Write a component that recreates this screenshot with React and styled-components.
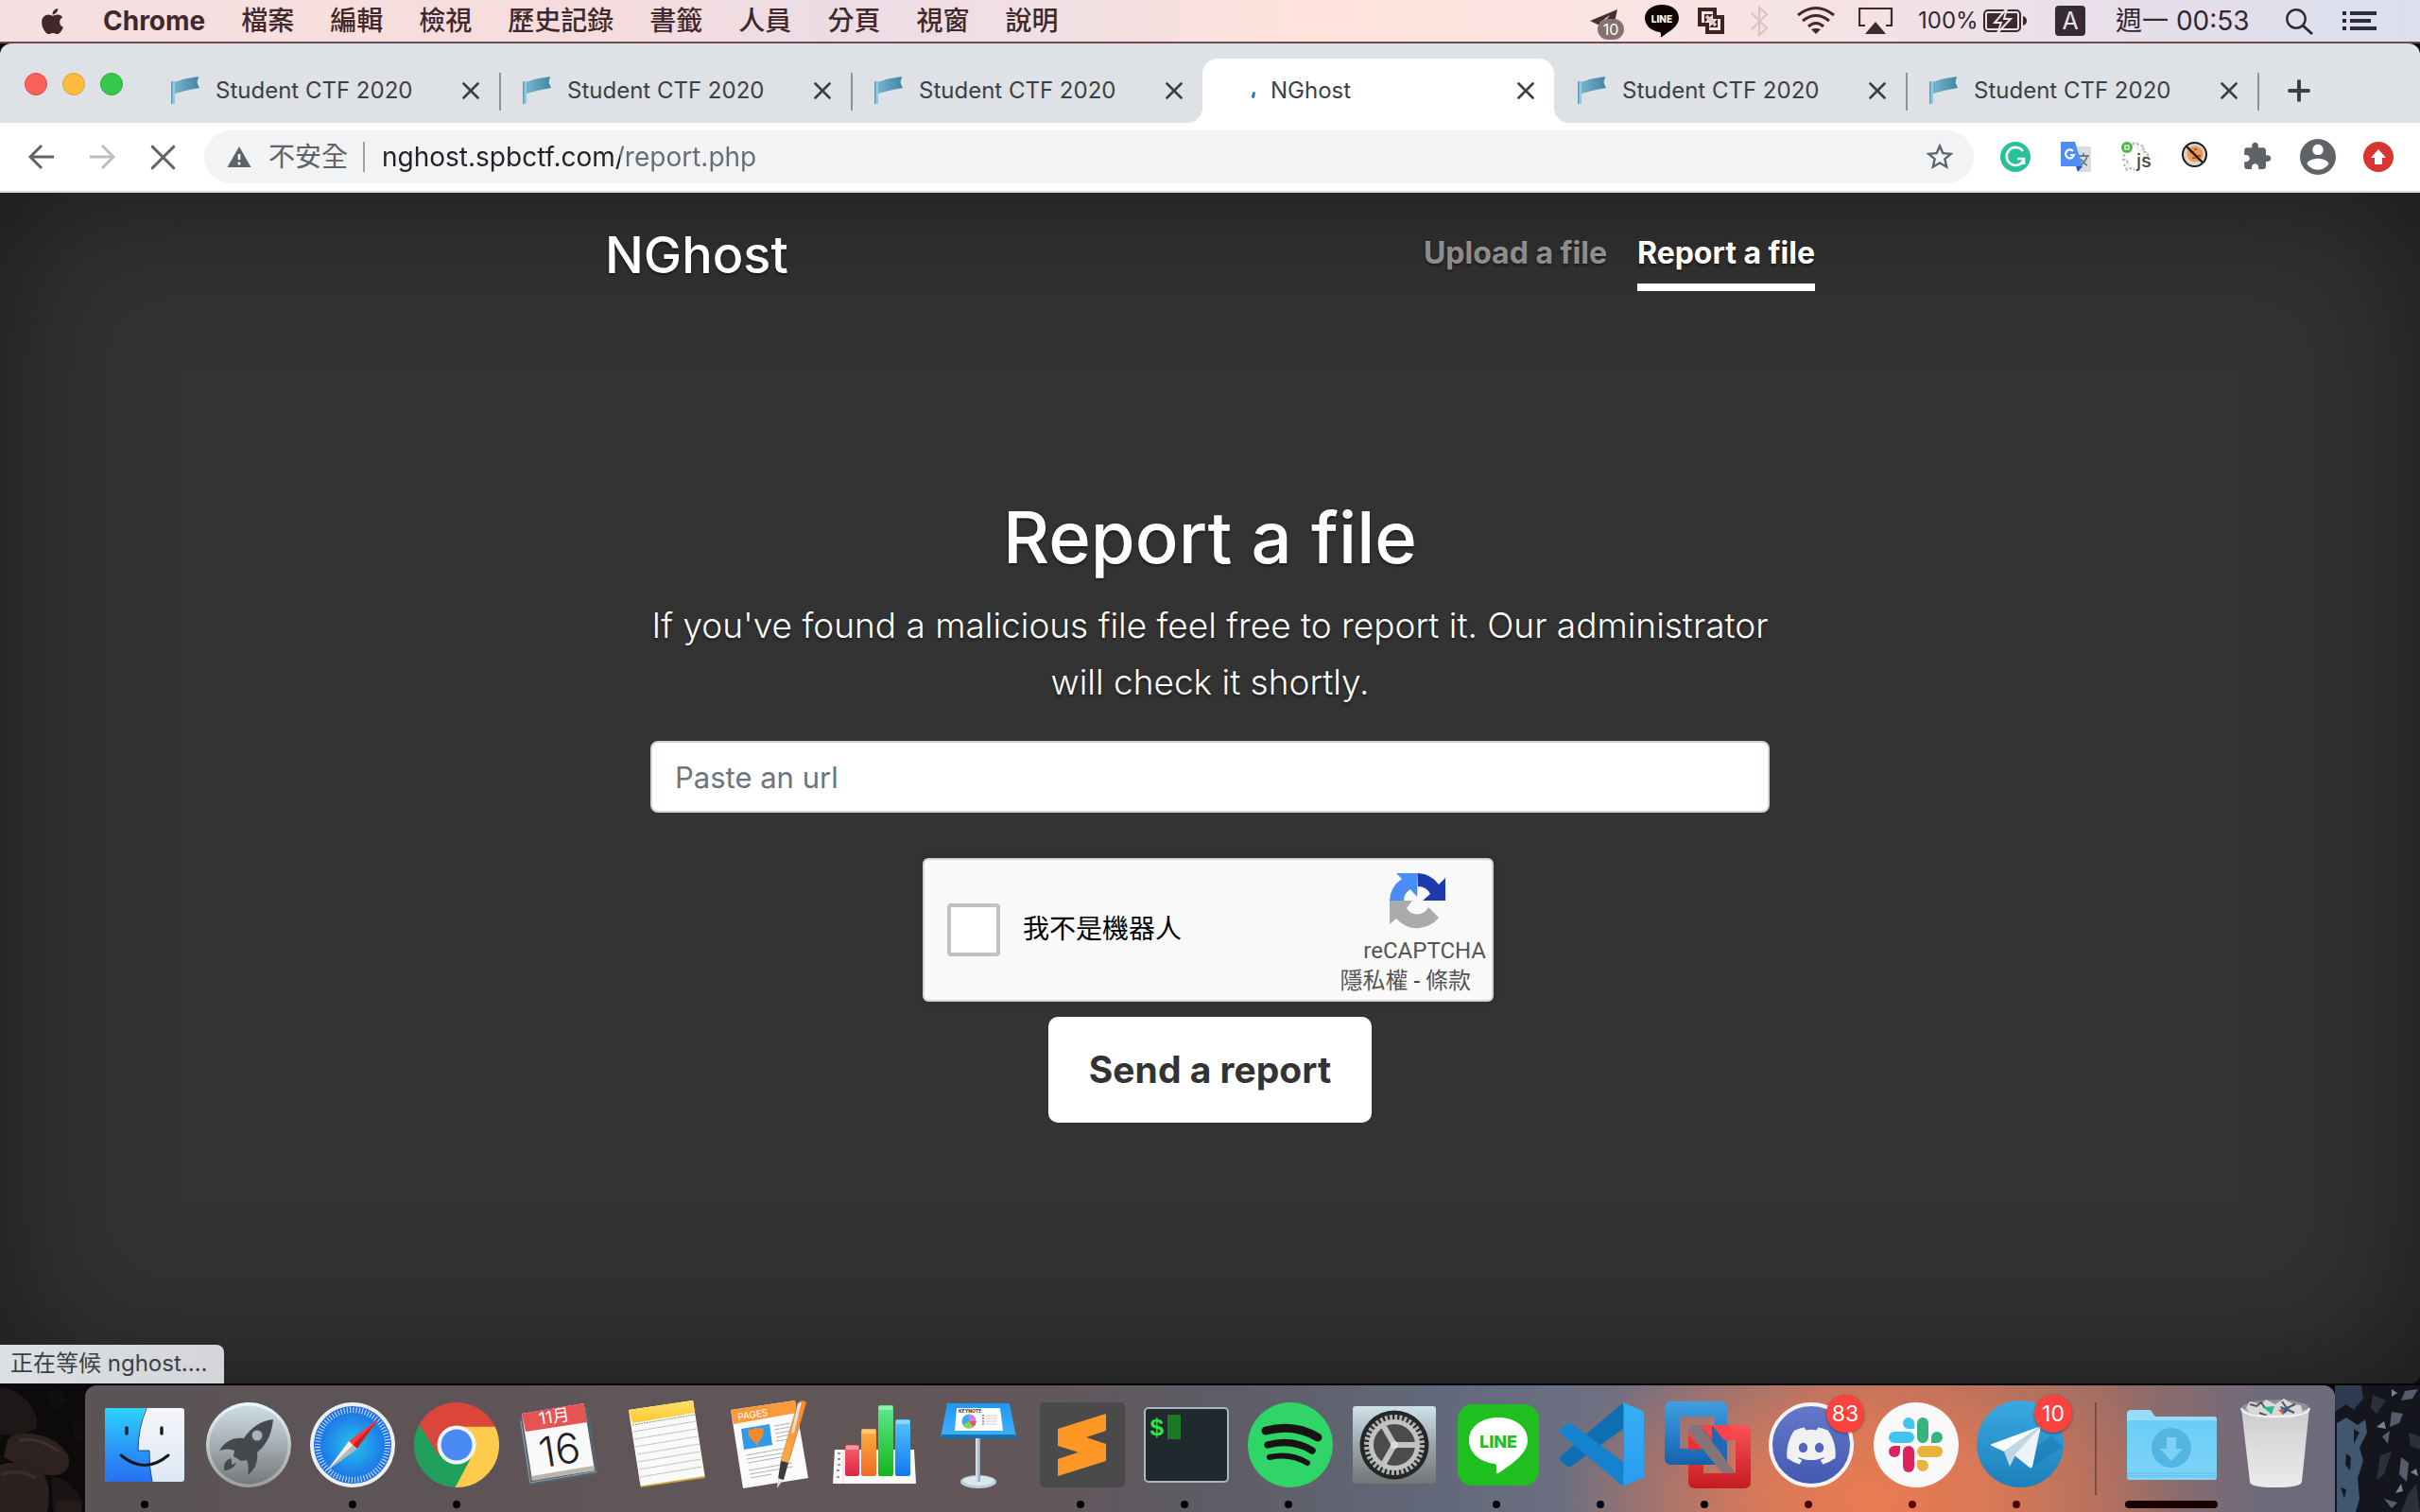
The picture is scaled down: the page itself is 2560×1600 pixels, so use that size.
import React from "react";
import styled, { createGlobalStyle, css } from "styled-components";
import { FaApple, FaDiscord } from "react-icons/fa";

const sans = `Inter, "Noto Sans CJK TC", sans-serif`;

const GlobalStyle = createGlobalStyle`
  *, *::before, *::after { box-sizing: border-box; }
  body { margin: 0; font-family: ${sans}; background: #0c0a0b; }
  button { font: inherit; color: inherit; border: 0; padding: 0; background: none; cursor: pointer; }
  a { color: inherit; text-decoration: none; }
  svg { display: block; flex: none; }
`;

const Desktop = styled.div`
  display: flex;
  flex-direction: column;
  min-height: 100vh;
`;

/* ---------- menu bar ---------- */

const MenuBar = styled.header`
  display: flex;
  align-items: center;
  justify-content: space-between;
  height: 46px;
  border-bottom: 2px solid #6d4a52;
  padding: 0 46px 0 40px;
  color: #40282b;
  font-size: 28px;
  line-height: 44px;
  background: linear-gradient(90deg, #f4e0e2 0%, #f7dfde 14%, #f5dcdd 25%, #ecdde5 34%, #f1e0e4 44%, #ffe2da 54%, #fae4e2 66%, #f3e2e6 78%, #e6dfea 88%, #dbdfee 100%);
`;

const MenuGroup = styled.nav`
  display: flex;
  align-items: center;
  gap: 38px;
`;

const MenuItem = styled.button`
  white-space: nowrap;
  font-weight: ${(p) => (p.$strong ? 700 : 500)};
  font-size: 28px;
  line-height: 44px;
`;

const StatusGroup = styled.div`
  display: flex;
  align-items: center;
  color: #34272e;
`;

const StatusText = styled.span`
  font-size: ${(p) => p.$size}px;
  width: ${(p) => p.$width}px;
  white-space: nowrap;
  line-height: 44px;
`;

const StatusIcon = ({ x, w, children }) => (
  <svg width={w} height="44" viewBox={`${x} 0 ${w} 44`}>{children}</svg>
);

/* ---------- browser window ---------- */

const Browser = styled.section`
  flex: 1;
  display: flex;
  flex-direction: column;
  border-radius: 12px 12px 10px 0;
  overflow: hidden;
`;

const TabStrip = styled.div`
  display: flex;
  align-items: flex-end;
  height: 84px;
  background: #dee1e6;
`;

const Lights = styled.div`
  display: flex;
  gap: 16px;
  width: 156px;
  padding-left: 26px;
  align-self: flex-start;
  margin-top: 31px;
`;

const Light = styled.button`
  width: 24px;
  height: 24px;
  border-radius: 50%;
  background: ${(p) => p.$fill};
  border: 1px solid ${(p) => p.$edge};
`;

const flare = css`
  content: "";
  position: absolute;
  bottom: 0;
  width: 16px;
  height: 16px;
`;

const Tab = styled.div`
  position: relative;
  display: flex;
  align-items: center;
  flex: 0 1 372px;
  height: 68px;
  padding: 0 19px 0 24px;
  color: #3c4043;
  ${(p) => p.$active && css`
    background: #fff;
    border-radius: 16px 16px 0 0;
    &::before { ${flare} left: -16px; background: radial-gradient(circle at 0 0, transparent 16px, #fff 16px); }
    &::after { ${flare} right: -16px; background: radial-gradient(circle at 100% 0, transparent 16px, #fff 16px); }
  `}
`;

const TabTitle = styled.span`
  flex: 1;
  margin-left: 16px;
  font-size: 24px;
  line-height: 32px;
  white-space: nowrap;
`;

const TabDivider = styled.i`
  width: 2px;
  height: 40px;
  margin: 0 -2px 13px 0;
  background: #8f9296;
`;

const IconButton = styled.button`
  display: grid;
  place-items: center;
  width: ${(p) => p.$size}px;
  height: ${(p) => p.$size}px;
`;

const NewTab = styled(IconButton)`
  margin: 0 0 2px 12px;
`;

const Toolbar = styled.div`
  display: flex;
  align-items: center;
  height: 74px;
  padding: 0 12px;
  background: #fff;
  border-bottom: 2px solid #d9dbdd;
`;

const Omnibox = styled.div`
  flex: 1;
  display: flex;
  align-items: center;
  height: 56px;
  margin: 0 12px;
  padding: 0 20px 0 24px;
  border-radius: 28px;
  background: #f1f3f4;
`;

const Security = styled.button`
  display: flex;
  align-items: center;
  gap: 18px;
  height: 32px;
  padding-right: 16px;
  border-right: 2px solid #9fa2a5;
  color: #5f6368;
  font-size: 28px;
  line-height: 32px;
`;

const Address = styled.input`
  flex: 1;
  min-width: 0;
  margin-left: 18px;
  padding: 0;
  border: 0;
  outline: 0;
  height: 40px;
  font: 400 28px/40px ${sans};
  color: #202124;
  background: linear-gradient(90deg, #202124 252px, #686b6f 252px);
  -webkit-background-clip: text;
  background-clip: text;
  -webkit-text-fill-color: transparent;
`;

/* ---------- web page ---------- */

const Page = styled.div`
  position: relative;
  flex: 1;
  display: flex;
  flex-direction: column;
  align-items: center;
  background: #333;
  box-shadow: inset 0 0 160px rgba(0, 0, 0, 0.5);
  color: #fff;
  text-shadow: 0 2px 3px rgba(0, 0, 0, 0.5);
`;

const Masthead = styled.header`
  display: flex;
  justify-content: space-between;
  align-items: flex-start;
  width: 100%;
  max-width: 1280px;
  padding-top: 32px;
`;

const Brand = styled.h3`
  margin: 0;
  font-size: 54px;
  font-weight: 500;
  line-height: 68px;
`;

const SiteNav = styled.nav`
  display: flex;
  gap: 32px;
`;

const NavLink = styled.a`
  padding: 8px 0;
  font-size: 32px;
  font-weight: 700;
  line-height: 48px;
  color: ${(p) => (p.$active ? "#fff" : "rgba(255, 255, 255, 0.5)")};
  border-bottom: 8px solid ${(p) => (p.$active ? "#fff" : "transparent")};
`;

const Cover = styled.main`
  width: 100%;
  max-width: 1184px;
  margin-top: 212px;
  display: flex;
  flex-direction: column;
  align-items: center;
  text-align: center;
`;

const Title = styled.h1`
  margin: 0 0 16px;
  font-size: 76px;
  font-weight: 500;
  line-height: 96px;
`;

const Lead = styled.p`
  margin: 0 -16px 32px;
  font-size: 37px;
  font-weight: 300;
  line-height: 60px;
`;

const ReportForm = styled.form`
  width: 100%;
  display: flex;
  flex-direction: column;
  align-items: center;
`;

const UrlField = styled.input`
  width: 100%;
  height: 76px;
  padding: 0 24px;
  border: 2px solid #ced4da;
  border-radius: 8px;
  background: #fff;
  font: 400 31px/48px ${sans};
  color: #495057;
  &::placeholder { color: #6c757d; opacity: 1; }
`;

const Captcha = styled.div`
  display: flex;
  align-items: center;
  width: 604px;
  height: 152px;
  margin: 48px 4px 16px 0;
  padding: 0 6px 0 24px;
  border: 2px solid #d3d3d3;
  border-radius: 6px;
  background: #f9f9f9;
  box-shadow: 0 0 8px 2px rgba(0, 0, 0, 0.08);
  text-shadow: none;
`;

const CaptchaBox = styled.input`
  appearance: none;
  width: 56px;
  height: 56px;
  margin: 0 24px 0 0;
  border: 4px solid #c1c1c1;
  border-radius: 4px;
  background: #fff;
`;

const CaptchaLabel = styled.label`
  flex: 1;
  text-align: left;
  font: 400 28px/34px Roboto, "Noto Sans CJK TC", sans-serif;
  color: #000;
`;

const CaptchaBrand = styled.div`
  display: flex;
  flex-direction: column;
  align-items: flex-end;
  padding-top: 8px;
  font: 400 24px/32px Roboto, "Noto Sans CJK TC", sans-serif;
  color: #555;
  svg { margin: 0 40px 4px 0; }
`;

const CaptchaLinks = styled.div`
  padding-right: 16px;
  color: #333;
  a { color: #555; }
`;

const SendButton = styled.button`
  height: 112px;
  padding: 0 43px;
  border-radius: 10px;
  background: #fff;
  color: #333;
  font-size: 39px;
  font-weight: 700;
  line-height: 60px;
`;

const StatusBubble = styled.div`
  position: absolute;
  left: 0;
  bottom: 0;
  padding: 4px 18px 5px 11px;
  border-radius: 0 8px 0 0;
  background: linear-gradient(90deg, #dcdfe4, #d3d5da);
  color: #3c4043;
  font-size: 24px;
  line-height: 32px;
  text-shadow: none;
`;

/* ---------- dock ---------- */

const Shelf = styled.footer`
  display: flex;
  justify-content: center;
  padding-top: 2px;
  background: #060506;
`;

const Wallpaper = styled.div`
  flex: 1 1 0;
  min-width: 0;
  height: 134px;
  overflow: hidden;
  background: ${(p) => p.$fill};
`;

const DockBar = styled.nav`
  display: flex;
  align-items: flex-start;
  padding: 8px 8px 4px;
  border-radius: 12px 12px 0 0;
  background:
    radial-gradient(ellipse 330px 200px at 1890px 120px, #ea7c52 0%, rgba(226, 122, 84, 0.85) 40%, rgba(200, 116, 92, 0) 100%),
    linear-gradient(90deg, #5a5456 0%, #5f5457 20%, #625659 40%, #5e5c64 50%, #62687a 60%, #6c6f82 66%, #7d6f7e 74%, #a06c62 80%, #996c66 90%, #6d6a7b 97%, #6c6b7d 100%);
`;

const DockItem = styled.button`
  position: relative;
  display: flex;
  flex-direction: column;
  align-items: center;
  width: 110px;
  height: 122px;
`;

const RunningMark = styled.i`
  width: ${(p) => (p.$wide ? 98 : 8)}px;
  height: 8px;
  border-radius: 4px;
  background: ${(p) => p.$color || "#000"};
`;

const DockDivider = styled.i`
  width: 2px;
  height: 98px;
  margin: 10px 24px 0 28px;
  background: #7a4d49;
`;

const DockBadge = styled.span`
  position: absolute;
  top: 2px;
  left: 74px;
  width: 40px;
  height: 40px;
  border-radius: 50%;
  background: #fa423e;
  box-shadow: 0 1px 3px rgba(0, 0, 0, 0.4);
  color: #fff;
  font-size: 23px;
  line-height: 40px;
  text-align: center;
`;

/* ---------- small drawings ---------- */

const Flag = () => (
  <svg width="32" height="32" viewBox="0 0 32 32">
    <defs><linearGradient id="flag"><stop offset="0" stopColor="#79b4cf" /><stop offset="1" stopColor="#3f86a3" /></linearGradient></defs>
    <path d="M4 7 15 3.500 30 1 28.500 7.500 31 13 18 15.500 5 19Z" fill="url(#flag)" />
    <path d="M2 6h3v24H2z" fill="#8fcbe6" /><path d="M1 6h1.500v24H1z" fill="#5f9db9" />
  </svg>
);

const Spinner = () => (
  <svg width="32" height="32" viewBox="0 0 32 32"><path d="M30.500 17.500q0 3-1.500 6" stroke="#1a73e8" strokeWidth="3" fill="none" /></svg>
);

const Cross = ({ size, w, color = "#3c4043" }) => (
  <svg width={size} height={size} viewBox="0 0 24 24"><path d="m2 2 20 20M22 2 2 22" stroke={color} strokeWidth={w} strokeLinecap="round" /></svg>
);

const BackArrow = ({ flip, color }) => (
  <svg width="28" height="28" viewBox="0 0 28 28">
    <path d="M27 14H3M14 2 2 14l12 12" transform={flip ? "translate(28 0) scale(-1 1)" : undefined} stroke={color} strokeWidth="3" fill="none" />
  </svg>
);

const RedRocks = () => (
  <svg width="90" height="134" viewBox="0 0 90 134">
    <path d="M0 2q22 2 34 22 8 12 4 22-20 10-38 6Z" fill="#1d1817" />
    <path d="M8 58q8-10 30-6 24 4 34 22 4 14-8 20-14 4-26-4-20-6-34-14Z" fill="#2d2220" /><path d="M20 58q20-4 42 12" stroke="#40302c" strokeWidth="3" fill="none" />
    <path d="M0 84q20-6 42 4 14 14 8 46H0Z" fill="#2b2120" /><path d="M2 94q20-6 36 4" stroke="#3c2c29" strokeWidth="4" fill="none" />
    <path d="M54 96q20 2 34 28l-4 10H56Z" fill="#181413" /><path d="m48 10 14-6 10 12-12 10Zm28 30 12-4v24l-10-4Z" fill="#110e0f" />
    <path d="M58 124q10-6 28 0v10H60Z" fill="#251c1a" />
  </svg>
);

const BlueRocks = () => (
  <svg width="90" height="134" viewBox="0 0 90 134">
    <path d="M0 0h28l2 14-10 12-8-6-12 8Z" fill="#2c3b50" />
    <path d="m2 40 10-6 12 8 8-6 2 14-8 16 4 14-6 18 2 22-4 14H2Z" fill="#41566f" />
    <path d="m12 72 5 4-1 14-5-6Zm8-26 6 4-6 12Zm-14 62 6 2-2 10Z" fill="#131822" />
    <path d="m60 28 12 2-4 10-10 4Zm14-22 14-2-6 10-12 2Zm-4 70 8 6-2 20-8-8Zm-18 44 14 4-6 6Zm-2-66 8-6-2 14Z" fill="#565c6d" />
    <path d="m40 10 14 6-10 14-6-6Zm38 40 12 4v14l-10-4Zm-30 24 12-4-8 24-8 6Zm38 30 4 30H70l8-20Z" fill="#2c303c" />
    <path d="m44 44 8-6 2 8Zm20 70 6-10 2 8Zm-4-110 6 4-6 4Zm20 88 6-4 2 8Z" fill="#7b8296" />
  </svg>
);

const extensions = [
  ["Grammarly", <><circle cx="32" cy="32" r="16" fill="#27c29a" /><path d="M40 26a9.500 9.500 0 1 0 1 9M34 34h7v6" stroke="#fff" strokeWidth="2.600" fill="none" /></>],
  ["Translate", <>
    <path d="M30 21h17a1 1 0 0 1 1 1v25a1 1 0 0 1-1 1H35Z" fill="#dcdcdc" />
    <path d="M35 31h11M40 28v3m4 0q-2 7-8 10m1-7q3 5 7 7" stroke="#64808c" strokeWidth="1.800" fill="none" />
    <path d="M17 16h14l8 26H17a1 1 0 0 1-1-1V17a1 1 0 0 1 1-1Z" fill="#4f8df5" /><path d="m32 42 7 0-5 6Z" fill="#3550b8" />
    <path d="M29 26a4.500 4.500 0 1 0 1 4h-4" stroke="#fff" strokeWidth="2.200" fill="none" />
  </>],
  ["Script inspector", <>
    <path d="M28 19q3-4 6 0l6 2-1 6q6-1 5 4l-5 2M19 29l-1 6q6 0 4 4l-3 2 3 5q6-4 8 0" stroke="#b5b5b5" strokeWidth="2" strokeDasharray="3 2" fill="#f4f4f4" />
    <circle cx="22" cy="22" r="6" fill="#4cb648" /><path d="M20 20h4v4h-4z" fill="none" stroke="#d8f3d5" strokeWidth="1.500" />
    <text x="32" y="43" fontSize="20" fontWeight="500" fontFamily="Inter, sans-serif" fill="#4a4a4a">js</text>
  </>],
  ["Cookie blocker", <>
    <circle cx="29.500" cy="29.500" r="12.500" fill="#d8d6d2" /><circle cx="30" cy="29" r="8.500" fill="#ef9a50" />
    <path d="M25 27h4m3 4h4m-7-7h3m-5 9h4" stroke="#a85f26" strokeWidth="2" />
    <circle cx="29.500" cy="29.500" r="12.500" fill="none" stroke="#1d1a18" strokeWidth="2" /><path d="m20.500 20.500 18 18" stroke="#1d1a18" strokeWidth="2.400" />
  </>],
  ["Extensions", <path transform="translate(15.500 15.500) scale(1.340)" fill="#5f6368" d="M20.500 11H19V7c0-1.100-.9-2-2-2h-4V3.500C13 2.120 11.880 1 10.500 1S8 2.120 8 3.500V5H4c-1.100 0-1.990.9-1.990 2v3.800H3.500c1.490 0 2.700 1.210 2.700 2.700s-1.210 2.700-2.700 2.700H2V20c0 1.100.9 2 2 2h3.800v-1.500c0-1.490 1.210-2.700 2.700-2.700 1.490 0 2.700 1.210 2.700 2.700V22H17c1.100 0 2-.9 2-2v-4h1.500c1.380 0 2.500-1.120 2.500-2.500S21.880 11 20.500 11z" />],
  ["Profile", <path transform="translate(9.200 9.200) scale(1.900)" fill="#5f6368" d="M12 2C6.480 2 2 6.480 2 12s4.480 10 10 10 10-4.480 10-10S17.520 2 12 2zm0 3c1.660 0 3 1.340 3 3s-1.340 3-3 3-3-1.340-3-3 1.340-3 3-3zm0 14.200c-2.500 0-4.710-1.280-6-3.220.03-1.990 4-3.080 6-3.080 1.990 0 5.970 1.090 6 3.080-1.290 1.940-3.500 3.220-6 3.220z" />],
  ["Update", <><circle cx="32" cy="32" r="16" fill="#d93430" /><path d="m32 24 8 9h-4v7h-8v-7h-4Z" fill="#fff" /></>],
];

/* ---------- dock drawings ---------- */

const grad = (id, stops, vertical = true) => (
  <linearGradient id={id} x1="0" y1="0" x2={vertical ? 0 : 1} y2={vertical ? 1 : 0}>
    {stops.map((c, i) => <stop key={i} offset={i / (stops.length - 1)} stopColor={c} />)}
  </linearGradient>
);

const Finder = () => <>
  <defs>{grad("fi", ["#2ed3fb", "#2a9cf8", "#2670f0"])}{grad("fj", ["#f6f7fa", "#dbe8f4"])}</defs>
  <rect x="13" y="16" width="84" height="78" rx="3" fill="url(#fj)" />
  <path d="M16 16h40q-8 22-8 45h12q-.5 17 3 33H16a3 3 0 0 1-3-3V19a3 3 0 0 1 3-3Z" fill="url(#fi)" />
  <path d="M57 16q-9 22-9 45h12q-.5 17 3 33" fill="none" stroke="#1b4a78" strokeWidth="1" />
  <path d="M36 37v6m37-6v6" stroke="#16202c" strokeWidth="3.500" strokeLinecap="round" />
  <path d="M30 66q25 21 50 0" stroke="#101820" strokeWidth="3" fill="none" strokeLinecap="round" />
</>;

const Launchpad = () => <>
  <defs>{grad("la", ["#cfdde2", "#a3aeb2", "#787878"])}{grad("lb", ["#e9fbff", "#c0c8ca", "#9c9c9c"])}</defs>
  <circle cx="55" cy="55" r="45" fill="url(#lb)" /><circle cx="55" cy="55" r="41.500" fill="url(#la)" />
  <path d="M81 28Q62 30 50 48 33 46 24 61q9-3 16 0l-1 6 8 5 6-1q3 7 1 16 12-9 10-24 15-12 17-35Z" fill="#43494c" />
  <circle cx="64" cy="45" r="5.500" fill="#a9b3b7" />
  <path d="M36 69q-8 3-7 13 9 0 13-8l-5 2q1-4-1-7Z" fill="#43494c" />
</>;

const Safari = () => <>
  <defs><radialGradient id="sa"><stop offset="0" stopColor="#24c5ee" /><stop offset="1" stopColor="#1d68e6" /></radialGradient></defs>
  <circle cx="55" cy="55" r="45" fill="#efefef" /><circle cx="55" cy="55" r="41" fill="url(#sa)" />
  <circle cx="55" cy="55" r="37" fill="none" stroke="#d4eefb" strokeWidth="6" strokeDasharray="1 2.230" />
  <path d="m83 27-23.500 32-8.500-8Z" fill="#f53d42" /><path d="m83 27-23.500 32-4.200-4Z" fill="#d01e26" />
  <path d="m28 82 23-31 8.500 8Z" fill="#f1efec" /><path d="m28 82 27.300-27 4.200 4Z" fill="#b9b7b5" />
</>;

const ChromeLogo = () => <>
  <path d="M55 55 16 32.500A45 45 0 0 1 94 32.500L96 36H55Z" fill="#da463a" />
  <path d="M55 35.500h40.600A45 45 0 0 1 53 100L72 65Z" fill="#fdcc4c" />
  <path d="M16 32.500A45 45 0 0 0 53.500 100L72 65 38 65 17 31Z" fill="#219f5d" />
  <path d="M55 35.500H95.600A45 45 0 0 0 93 31H60L17 31l-1.500 2.500L36 66Z" fill="#da463a" />
  <circle cx="55" cy="55" r="20.500" fill="#f4f4f4" /><circle cx="55" cy="55" r="16.500" fill="#4a8af4" />
</>;

const Calendar = () => <>
  <path d="m11 26 11 72 73-12-11-71Z" fill="#54646c" /><path d="m13 30 10 65 70-12" fill="none" stroke="#93a2a9" strokeWidth="1" />
  <path d="m14 22 65.500-11L91 82 25 92Z" fill="#fafafa" /><path d="m24 88 1 5 66-11-1-5Z" fill="#b9b5ae" />
  <path d="m14 22 65.500-11L83 31 18 41Z" fill="#e55353" />
  <g transform="rotate(-9 53 55)" textAnchor="middle" fontFamily='Inter, "Noto Sans CJK TC", sans-serif'>
    <text x="53" y="31" fontSize="18" fill="#fff">11月</text>
    <text x="53" y="76" fontSize="44" fontWeight="300" fill="#222">16</text>
  </g>
</>;

const Notes = () => <>
  <defs>{grad("no", ["#ffe06a", "#fdc92d"])}</defs>
  <path d="m17 18 68-10 13 82-68 10Z" fill="#c9a63a" /><path d="m17 18 68-10 12.500 80-68 10.500Z" fill="#fafaf9" />
  <path d="m17 18 68-10 2 13-66 11Z" fill="url(#no)" />
  <path d="m21 34 66-11" stroke="#8d8d8d" strokeWidth="1" strokeDasharray="2 1" />
  <path d="m22 41 66-11M23 49l66-11M24 57l66-11M26 65l66-11M27 73l66-11M28 81l66-11M29 89l66-11" stroke="#c3c3c3" strokeWidth="1" />
</>;

const Pages = () => <>
  <defs>{grad("pa", ["#fbb14a", "#f6852c"], false)}</defs>
  <path d="m15 18 68-10 14 82-69 11Z" fill="#fbfbfb" /><path d="m15 18 68-10 2 13-67 12Z" fill="#fa9a3a" />
  <text transform="translate(23 29) rotate(-9)" fontFamily="Inter, sans-serif" fontSize="10" fill="#fff">PAGES</text>
  <path d="m26 38 30-5 3 22-30 5Z" fill="#2f9ae8" /><path d="M42 54q-11-9-8-15 5 0 7-3 3 3 8 1 3 8-6 16l2 5Z" fill="#f58a2c" />
  <path d="m61 35 17-3M61 39l17-3M62 43l17-3M63 47l16-3M63 51l14-2M31 66l50-9M32 70l48-8M33 74l46-8M34 82l46-8M35 86l46-8M36 90l22-4" stroke="#b3b3b3" strokeWidth="1" />
  <path d="M86 11q4-5 9-1L76 74l-8-2Z" fill="url(#pa)" stroke="#d9701c" strokeWidth=".6" /><path d="m86 11-7 32 3-1 8-32Z" fill="#d9dfe4" />
  <path d="m68 72 8 2-5 18-6-1Z" fill="#3b3b3d" /><path d="m65 90 5 2-6 9Z" fill="#dfe4e8" />
</>;

const Numbers = () => <>
  <defs>{grad("n1", ["#f8646c", "#dc2440"])}{grad("n2", ["#fdb040", "#f06a24"])}{grad("n3", ["#5cea8e", "#16b41c"])}{grad("n4", ["#55c4fb", "#1278f0"])}</defs>
  <path d="M15 60h84l2 36H13Z" fill="#fafafa" /><path d="M24 60v36" stroke="#ddd" />
  <path d="M18 64h3m-3 6h3m-3 6h3m-4 6h3m-3 7h3" stroke="#777" strokeWidth="1.500" />
  <rect x="26" y="55" width="15" height="33" rx="2" fill="url(#n1)" /><rect x="43" y="38" width="16" height="50" rx="2" fill="url(#n2)" />
  <rect x="61" y="13" width="16" height="75" rx="2" fill="url(#n3)" /><rect x="79" y="28" width="16" height="60" rx="2" fill="url(#n4)" />
  <path d="M27 56h13v4H27zM44 39h14v4H44zM62 14h14v4H62zM80 29h14v4H80z" fill="#fff" opacity=".35" />
</>;

const Keynote = () => <>
  <defs>{grad("ke", ["#1d9af5", "#3fb0f8"])}{grad("kp", ["#e6eef4", "#8fa3b2"], false)}</defs>
  <path d="M54 47h5v46h-5z" fill="url(#kp)" /><ellipse cx="57" cy="94" rx="19" ry="7" fill="#bccddb" /><ellipse cx="57" cy="93" rx="16" ry="5" fill="#dbe6ee" />
  <path d="M54 80h5v14h-5z" fill="url(#kp)" />
  <path d="M24 11h66l7 36H17Z" fill="url(#ke)" /><path d="M18 44h78l1 4H17Z" fill="#1371ae" />
  <path d="M34 16h46l3 24H32Z" fill="#fff" />
  <text x="36" y="21" fontFamily="Inter, sans-serif" fontSize="5" fontWeight="700" fill="#333">KEYNOTE</text>
  <circle cx="47" cy="30" r="7.500" fill="#3fa9ee" /><path d="M47 30V22.500a7.500 7.500 0 0 1 7.500 7.500Z" fill="#d77be0" /><path d="M47 30h7.500a7.500 7.500 0 0 1-3 6Z" fill="#f04f5a" /><path d="m47 30 4.500 6a7.500 7.500 0 0 1-11-2Z" fill="#86d64f" />
  <path d="M61 24h2m-2 3h2m-2 3h2m-2 3h2" stroke="#e0519b" strokeWidth="1.500" /><path d="M65 24h12m-12 3h12m-12 3h12m-12 3h12" stroke="#ccc" />
</>;

const Sublime = () => <>
  <rect x="12" y="10" width="90" height="90" rx="5" fill="#4a4a4a" />
  <path d="m31 70 21-7 30-9v18L31 88Z" fill="#ff9726" />
  <path d="m52 63 18-6 12 15Z" fill="#e88212" />
  <path d="m31 38 51-16v18l-21 7 21 7v18L31 56Z" fill="#ff9726" />
</>;

const Terminal = () => <>
  <rect x="13" y="16" width="88" height="78" rx="4" fill="#20292e" stroke="#a9b7c0" strokeWidth="2" />
  <text x="18" y="45" fontFamily='"Liberation Mono", monospace' fontSize="26" fontWeight="700" fill="#28e83a">$</text>
  <path d="M37 23h14v26H37z" fill="#1c7a24" />
</>;

const Spotify = () => <>
  <circle cx="57" cy="55" r="45" fill="#2fd566" />
  <g fill="none" stroke="#191414" strokeLinecap="round"><path d="M31 40q30-8 55 7" strokeWidth="9" /><path d="M33 55q26-7 47 6" strokeWidth="7.500" /><path d="M35 68q22-5 40 6" strokeWidth="6" /></g>
</>;

const Settings = () => <>
  <defs>{grad("se", ["#cfe2ea", "#9ba6ab", "#757575"])}</defs>
  <rect x="13" y="14" width="88" height="82" rx="3" fill="url(#se)" /><circle cx="57" cy="55" r="36.500" fill="#23272a" />
  <circle cx="57" cy="55" r="29" fill="none" stroke="#b4b2b0" strokeWidth="6" strokeDasharray="3 2.060" /><circle cx="57" cy="55" r="24.500" fill="#4c4b4a" stroke="#c4c2c0" strokeWidth="5" />
  <path d="m57 55 24 0M57 55 45 34M57 55 45 76" stroke="#c4c2c0" strokeWidth="6" /><circle cx="57" cy="55" r="4" fill="#dddbd9" />
</>;

const Line = () => <>
  <rect x="14" y="12" width="86" height="86" rx="16" fill="#20bf20" />
  <path d="M57 26c18 0 31 10 31 24 0 15-18 26-31 35-3 1-2-2-2-6 0-2 0-4-2-4-16-2-27-12-27-25 0-14 13-24 31-24Z" fill="#fff" />
  <text x="57" y="58" textAnchor="middle" fontFamily="Inter, sans-serif" fontSize="18" fontWeight="800" fill="#20bf20">LINE</text>
</>;

const Code = () => <>
  <defs>{grad("vs", ["#34b0f2", "#2b9bf0"])}</defs>
  <path d="M13 67 79 10v28L25 77q-3 2-6 0l-6-5q-3-3 0-5Z" fill="#0f6fb3" />
  <path d="M13 43 79 99V73L25 33q-3-2-6 0l-6 5q-3 3 0 5Z" fill="#1482cf" />
  <path d="m78 10 20 8q3 2 3 5v64q0 3-3 4l-20 8q2-3 2-6V16q0-4-2-6Z" fill="url(#vs)" />
</>;

const VMware = () => <>
  <defs>{grad("v1", ["#3f9fe2", "#135fae"])}{grad("v2", ["#fc5254", "#c61b20"])}</defs>
  <path fillRule="evenodd" d="M45 34h52q7 0 7 7v53q0 7-7 7H45q-7 0-7-7V41q0-7 7-7Zm9 16v35h34V50Z" fill="url(#v2)" />
  <path fillRule="evenodd" d="M20 9h52q7 0 7 7v62L66 62V25H29v34h26l13 17H20q-7 0-7-7V16q0-7 7-7Z" fill="url(#v1)" />
  <path d="M63 34h20v16H63z" fill="#f5454a" />
  <path d="M50 34h13l16 20v24Z" fill="#1f69b3" /><path d="M50 34h13v16Z" fill="#f5454a" />
  <path d="M38 44 52 60H38Z" fill="#e0333a" />
  <path d="M41 34h9l38 51H74L38 41v-6Z" fill="#857478" />
</>;

const Discord = () => <>
  <defs>{grad("di", ["#6679c9", "#4259b2"])}</defs>
  <circle cx="58" cy="55" r="43" fill="url(#di)" stroke="#f3f3f5" strokeWidth="4" />
  <FaDiscord x="30" y="28" size="56" color="#f1f1f1" />
</>;

const Slack = () => <>
  <circle cx="59" cy="55" r="45" fill="#f9f9f9" />
  <g fill="#41c5ee"><rect x="30" y="41" width="27" height="12" rx="6" /><path d="M57 38h-6a6 6 0 1 1 6-6Z" /></g>
  <g fill="#37b37e"><rect x="60" y="26" width="12" height="27" rx="6" /><path d="M75 53v-6a6 6 0 1 1 6 6Z" /></g>
  <g fill="#de235c"><rect x="45" y="56" width="12" height="28" rx="6" /><path d="M42 56v6a6 6 0 1 1-6-6Z" /></g>
  <g fill="#ebb13d"><rect x="60" y="56" width="27" height="12" rx="6" /><path d="M60 71h6a6 6 0 1 1-6 6Z" /></g>
</>;

const Telegram = () => <>
  <defs>{grad("te", ["#3aa9e2", "#1b80bb"])}</defs>
  <circle cx="59" cy="54" r="46" fill="url(#te)" />
  <path d="m48 78 14-11 9 12 33-22-12-12Z" fill="#1b76ad" opacity=".5" />
  <path d="M29 54q-2 1 0 2l13 6 39-27Z" fill="#fff" /><path d="m42 62 6 16 6-12 27-31Z" fill="#c3d6e4" />
  <path d="m53 66 16 13q2 1 3-1l9-43Z" fill="#eef5fa" />
</>;

const Folder = () => <>
  <defs>{grad("fo", ["#6bcdf5", "#7fd4f8"])}</defs>
  <path d="M8 22q0-4 4-4h19q3 0 4 3l3 4h62q3 0 3 3v10H8Z" fill="#97dcfb" /><path d="M8 32q0-3 3-3h89q3 0 3 3v57q0 3-3 3H11q-3 0-3-3Z" fill="url(#fo)" />
  <path d="M8 85h95M8 88h95" stroke="#5bb8e0" strokeWidth="1" />
  <circle cx="55" cy="58" r="21" fill="#54b5e0" /><path d="M50 47h10v12h7L55 72 43 59h7Z" fill="#7bd1f6" />
</>;

const Trash = () => <>
  <defs>{grad("tr", ["#cfcfcf", "#e3e2e1", "#f0f0f0"])}</defs>
  <ellipse cx="55" cy="16" rx="36" ry="9" fill="#8e9090" />
  <path d="m24 16 4-7 12 3 5-5 10 5 9-6 10 6 8 1 2 8-10 7H34Z" fill="#d9dadb" />
  <path d="m28 12 7 2 5-4 4 6m18-7 5 7 9-4m-38 9 8 3m20-7 9 4" stroke="#555" strokeWidth="2" fill="none" /><path d="m42 15 12-1-3 9Z" fill="#35b594" /><path d="m60 14 11 3-8 6Z" fill="#3f5f9e" /><path d="m58 18 6-1-1 6Z" fill="#c9603a" />
  <path d="M19 16q36 19 72 0l-8 78q-1 6-28 6t-27-6Z" fill="url(#tr)" opacity=".96" />
  <path d="M19 16q0 9 36 9t36-9" stroke="#f4f4f4" strokeWidth="2" fill="none" />
</>;

const dockApps = [
  ["Finder", Finder, "#000"], ["Launchpad", Launchpad], ["Safari", Safari, "#000"], ["Google Chrome", ChromeLogo, "#000"],
  ["Calendar", Calendar], ["Notes", Notes], ["Pages", Pages], ["Numbers", Numbers], ["Keynote", Keynote],
  ["Sublime Text", Sublime, "#000"], ["iTerm", Terminal, "#000"], ["Spotify", Spotify, "#000"], ["System Preferences", Settings],
  ["LINE", Line, "#000"], ["Visual Studio Code", Code, "#020016"], ["VMware Fusion", VMware, "#000"],
  ["Discord", Discord, "#430000", "83"], ["Slack", Slack, "#5e0000"], ["Telegram", Telegram, "#430000", "10"],
];

const DockApp = ({ name, Art, dot, badge, wide }) => (
  <DockItem aria-label={name}>
    <svg width="110" height="114" viewBox="0 0 110 114">{<Art />}</svg>
    {dot && <RunningMark $color={dot} $wide={wide} />}
    {badge && <DockBadge>{badge}</DockBadge>}
  </DockItem>
);

const menus = ["檔案", "編輯", "檢視", "歷史記錄", "書籤", "人員", "分頁", "視窗", "說明"];

const CtfTab = () => (
  <Tab role="tab">
    <Flag /><TabTitle>Student CTF 2020</TabTitle>
    <IconButton $size={22} aria-label="Close tab"><Cross size={18} w={3.6} /></IconButton>
  </Tab>
);

export default function App() {
  return (
    <Desktop>
      <GlobalStyle />
      <MenuBar>
        <MenuGroup>
          <FaApple size={31} />
          <MenuItem $strong>Chrome</MenuItem>
          {menus.map((m) => <MenuItem key={m}>{m}</MenuItem>)}
        </MenuGroup>
        <StatusGroup>
          <StatusIcon x={1682} w={58}>
            <path d="m1682 22 29-12-3 13-18 3Z" fill="#453032" /><path d="m1692 24 11-8-7 9Z" fill="#fae4e2" />
            <rect x="1690" y="20" width="28" height="22" rx="11" fill="#84706f" />
            <text x="1704" y="37" fontSize="16" textAnchor="middle" fontFamily="Inter, sans-serif" fill="#fff">10</text>
          </StatusIcon>
          <StatusIcon x={1740} w={56}>
            <path d="M1758 5c11 0 18 6 18 14 0 9-10 14-18 20-2 1 0-4-2-5-9-1-16-7-16-15s8-14 18-14Z" fill="#120303" />
            <text x="1758" y="24" fontSize="10" fontWeight="800" textAnchor="middle" fontFamily="Inter, sans-serif" fill="#fff">LINE</text>
          </StatusIcon>
          <StatusIcon x={1796} w={56}>
            <path d="M1808 26h-10V10h16v6M1812 18h10v16h-16v-6" fill="none" stroke="#40241f" strokeWidth="4" />
            <path d="m1803 15h9l-9 9ZM1817 29h-9l9-9Z" fill="#40241f" /><path d="m1805 17 10 10" stroke="#dccaca" strokeWidth="3.500" />
          </StatusIcon>
          <StatusIcon x={1852} w={49}>
            <path d="m1853 14 16 16-8 7V8l8 7-16 16" fill="none" stroke="#d9c3c4" strokeWidth="2.200" />
          </StatusIcon>
          <StatusIcon x={1901} w={65}>
            <g fill="none" stroke="#40282b" strokeWidth="3"><path d="M1902 16q19-15 38 0M1907 22q14-11 28 0M1913 28q8-7 16 0" /></g><path d="M1916 31q5-2 10 0l-5 5Z" fill="#40282b" />
          </StatusIcon>
          <StatusIcon x={1966} w={63}>
            <path d="M1973 27h-6V9h34v18h-6" fill="none" stroke="#40282b" strokeWidth="2.200" /><path d="m1984 23 11 13h-22Z" fill="#40282b" />
          </StatusIcon>
          <StatusText $size={24} $width={69}>100%</StatusText>
          <StatusIcon x={2098} w={76}>
            <rect x="2099" y="11" width="38" height="22" rx="4" fill="none" stroke="#3a2a30" strokeWidth="2" /><rect x="2102" y="14" width="32" height="16" rx="1" fill="#3a2a30" /><path d="M2140 17q4 1 4 5t-4 5Z" fill="#3a2a30" />
            <path d="m2123 9-13 15h7l-4 11 14-15h-7Z" fill="#3a2a30" stroke="#f3e2e6" strokeWidth="2" />
          </StatusIcon>
          <StatusIcon x={2174} w={64}>
            <rect x="2174" y="6" width="32" height="32" rx="4" fill="#372b33" /><text x="2190" y="31" fontSize="25" textAnchor="middle" fontFamily="Inter, sans-serif" fill="#efe4ea">A</text>
          </StatusIcon>
          <StatusText $size={28} $width={180}>週一 00:53</StatusText>
          <StatusIcon x={2418} w={60}>
            <circle cx="2429" cy="20" r="9.700" fill="none" stroke="#2d2a38" strokeWidth="2.400" /><path d="m2436 27 10 9" stroke="#2d2a38" strokeWidth="3" />
          </StatusIcon>
          <StatusIcon x={2478} w={36}>
            <path d="M2478 14h4m4 0h28M2478 22h4m4 0h22M2478 30h4m4 0h28" stroke="#2d2a38" strokeWidth="4" />
          </StatusIcon>
        </StatusGroup>
      </MenuBar>

      <Browser>
        <TabStrip role="tablist">
          <Lights>
            <Light aria-label="Close" $fill="#fc605b" $edge="#e2463f" />
            <Light aria-label="Minimize" $fill="#fdbc40" $edge="#dfa032" />
            <Light aria-label="Zoom" $fill="#34c94a" $edge="#27aa35" />
          </Lights>
          <CtfTab /><TabDivider />
          <CtfTab /><TabDivider />
          <CtfTab />
          <Tab $active role="tab" aria-selected="true">
            <Spinner /><TabTitle>NGhost</TabTitle>
            <IconButton $size={22} aria-label="Close tab"><Cross size={18} w={3.6} /></IconButton>
          </Tab>
          <CtfTab /><TabDivider />
          <CtfTab /><TabDivider />
          <NewTab $size={64} aria-label="New tab">
            <svg width="24" height="24" viewBox="0 0 24 24"><path d="M12 2v20M2 12h20" stroke="#3c4043" strokeWidth="4" strokeLinecap="round" /></svg>
          </NewTab>
        </TabStrip>

        <Toolbar>
          <IconButton $size={64} aria-label="Back"><BackArrow color="#5f6368" /></IconButton>
          <IconButton $size={64} aria-label="Forward"><BackArrow flip color="#bcbec1" /></IconButton>
          <IconButton $size={64} aria-label="Stop"><Cross size={27} w={2.8} color="#5f6368" /></IconButton>
          <Omnibox>
            <Security>
              <svg width="26" height="24" viewBox="0 0 26 24"><path d="m13 1 12.500 22H.5Z" fill="#5f6368" /><path d="M13 9v6m0 2.500v3" stroke="#f1f3f4" strokeWidth="2.600" /></svg>
              不安全
            </Security>
            <Address aria-label="Address" defaultValue="nghost.spbctf.com/report.php" />
            <IconButton $size={32} aria-label="Bookmark">
              <svg width="32" height="32" viewBox="1 1 22 22"><path fill="#5f6368" d="M22 9.240l-7.190-.62L12 2 9.190 8.630 2 9.240l5.460 4.730L5.820 21 12 17.270 18.180 21l-1.630-7.030L22 9.240zM12 15.400l-3.760 2.270 1-4.280-3.320-2.880 4.380-.38L12 6.100l1.710 4.040 4.380.38-3.320 2.880 1 4.280L12 15.400z" /></svg>
            </IconButton>
          </Omnibox>
          {extensions.map(([name, art]) => (
            <IconButton key={name} $size={64} aria-label={name}><svg width="64" height="64" viewBox="0 0 64 64">{art}</svg></IconButton>
          ))}
        </Toolbar>

        <Page>
          <Masthead>
            <Brand>NGhost</Brand>
            <SiteNav>
              <NavLink href="#upload">Upload a file</NavLink>
              <NavLink href="#report" $active>Report a file</NavLink>
            </SiteNav>
          </Masthead>
          <Cover>
            <Title>Report a file</Title>
            <Lead>If you've found a malicious file feel free to report it. Our administrator will check it shortly.</Lead>
            <ReportForm onSubmit={(e) => e.preventDefault()}>
              <UrlField type="text" aria-label="Paste an url" placeholder="Paste an url" />
              <Captcha>
                <CaptchaBox type="checkbox" id="robot" />
                <CaptchaLabel htmlFor="robot">我不是機器人</CaptchaLabel>
                <CaptchaBrand>
                  <svg width="64" height="64" viewBox="0 0 64 64">
                    <path d="M61 31a29 29 0 0 0 0-1V7l-7 7A29 29 0 0 0 32 2v14q9 0 13 8l-8 7Z" fill="#1c3aa9" />
                    <path d="M32 2H9l6 6A29 29 0 0 0 2 31h15q0-8 7-12l7 8Z" fill="#4a8df5" />
                    <path d="M2 31v25l7-6a29 29 0 0 0 45-1L43 38a13 13 0 0 1-23 1l6-8Z" fill="#ababab" />
                  </svg>
                  <span>reCAPTCHA</span>
                  <CaptchaLinks><a href="#privacy">隱私權</a> - <a href="#terms">條款</a></CaptchaLinks>
                </CaptchaBrand>
              </Captcha>
              <SendButton type="submit">Send a report</SendButton>
            </ReportForm>
          </Cover>
          <StatusBubble>正在等候 nghost.…</StatusBubble>
        </Page>
      </Browser>

      <Shelf>
        <Wallpaper $fill="#0c0a0b"><RedRocks /></Wallpaper>
        <DockBar aria-label="Dock">
          {dockApps.map(([name, Art, dot, badge]) => <DockApp key={name} name={name} Art={Art} dot={dot} badge={badge} />)}
          <DockDivider />
          <DockApp name="Downloads" Art={Folder} dot="#1a0000" wide />
          <DockApp name="Trash" Art={Trash} />
        </DockBar>
        <Wallpaper $fill="#15161d"><BlueRocks /></Wallpaper>
      </Shelf>
    </Desktop>
  );
}
